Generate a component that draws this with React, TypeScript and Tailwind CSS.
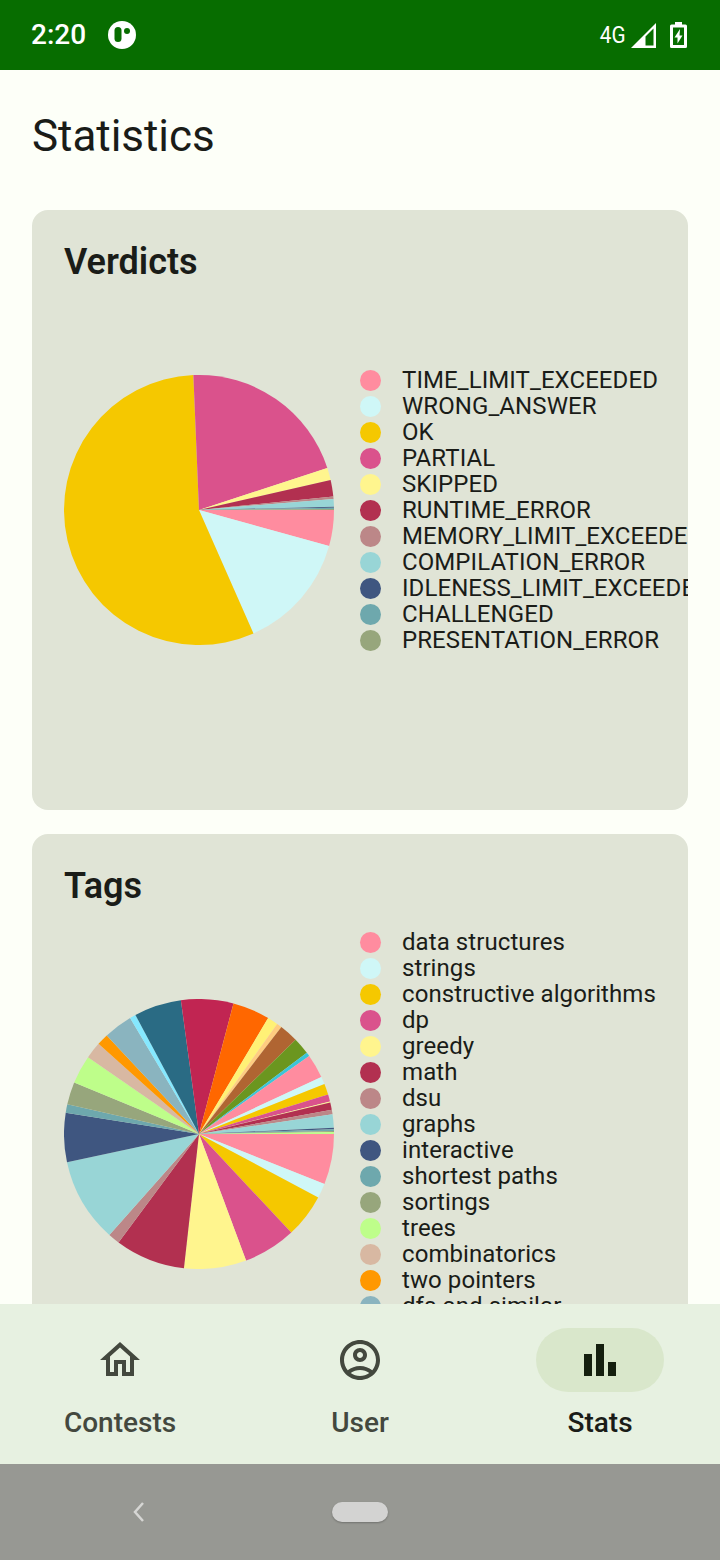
import React from "react";

type Slice = { color: string; end: number };

const verdictLabels = [
  "TIME_LIMIT_EXCEEDED",
  "WRONG_ANSWER",
  "OK",
  "PARTIAL",
  "SKIPPED",
  "RUNTIME_ERROR",
  "MEMORY_LIMIT_EXCEEDED",
  "COMPILATION_ERROR",
  "IDLENESS_LIMIT_EXCEEDED",
  "CHALLENGED",
  "PRESENTATION_ERROR",
];

const tagLabels = [
  "data structures",
  "strings",
  "constructive algorithms",
  "dp",
  "greedy",
  "math",
  "dsu",
  "graphs",
  "interactive",
  "shortest paths",
  "sortings",
  "trees",
  "combinatorics",
  "two pointers",
  "dfs and similar",
];

const palette = [
  "#FF8C9F",
  "#CFF7F7",
  "#F5C800",
  "#DA528C",
  "#FFF58E",
  "#B23050",
  "#BC8788",
  "#98D5D6",
  "#3F5680",
  "#6EA8AD",
  "#97A67C",
  "#BEFE8A",
  "#D8B8A2",
  "#FF9800",
  "#8AB4BF",
];

const verdictSlices: Slice[] = [
  { color: palette[0], end: 15.5 },
  { color: palette[1], end: 66.2 },
  { color: palette[2], end: 267.6 },
  { color: palette[3], end: 341.9 },
  { color: palette[4], end: 347.2 },
  { color: palette[5], end: 354.3 },
  { color: palette[6], end: 355.3 },
  { color: palette[7], end: 358.6 },
  { color: palette[8], end: 359 },
  { color: palette[9], end: 359.6 },
  { color: palette[10], end: 360 },
];

const tagSlices: Slice[] = [
  { color: palette[0], end: 21.7 },
  { color: palette[1], end: 28 },
  { color: palette[2], end: 46.9 },
  { color: palette[3], end: 69.6 },
  { color: palette[4], end: 96.4 },
  { color: palette[5], end: 126.6 },
  { color: palette[6], end: 131.6 },
  { color: palette[7], end: 167.9 },
  { color: palette[8], end: 189.1 },
  { color: palette[9], end: 192.7 },
  { color: palette[10], end: 202.4 },
  { color: palette[11], end: 214.7 },
  { color: palette[12], end: 221.9 },
  { color: palette[13], end: 226.9 },
  { color: palette[14], end: 239.3 },
  { color: "#85E8FF", end: 241.9 },
  { color: "#2A6B84", end: 262.3 },
  { color: "#C12552", end: 284.8 },
  { color: "#FF6700", end: 300.8 },
  { color: "#FFF176", end: 305.4 },
  { color: "#FFCC80", end: 307.6 },
  { color: "#B06532", end: 315.7 },
  { color: "#6B961F", end: 323 },
  { color: "#3BC5D8", end: 324.7 },
  { color: palette[0], end: 335 },
  { color: palette[1], end: 338.3 },
  { color: palette[2], end: 343 },
  { color: palette[3], end: 346.1 },
  { color: palette[4], end: 346.5 },
  { color: palette[5], end: 349.7 },
  { color: palette[6], end: 351.6 },
  { color: palette[7], end: 357.3 },
  { color: palette[8], end: 358 },
  { color: palette[9], end: 358.7 },
  { color: palette[10], end: 359.2 },
  { color: palette[11], end: 360 },
];

const slicePath = (start: number, end: number) => {
  const r = 135;
  const toXY = (deg: number) => {
    const rad = (deg * Math.PI) / 180;
    return `${(135 + r * Math.cos(rad)).toFixed(2)} ${(135 + r * Math.sin(rad)).toFixed(2)}`;
  };
  const large = end - start > 180 ? 1 : 0;
  return `M135 135L${toXY(start)}A${r} ${r} 0 ${large} 1 ${toXY(end)}Z`;
};

const Pie: React.FC<{ slices: Slice[] }> = ({ slices }) => (
  <svg width="270" height="270" viewBox="0 0 270 270" className="shrink-0">
    {slices.map((s, i) => (
      <path key={i} d={slicePath(i === 0 ? 0 : slices[i - 1].end, s.end)} fill={s.color} />
    ))}
  </svg>
);

const Legend: React.FC<{ labels: string[] }> = ({ labels }) => (
  <ul className="ml-[26px] flex shrink-0 flex-col">
    {labels.map((label, i) => (
      <li key={label} className="flex h-[26px] items-center whitespace-nowrap">
        <span
          className="h-[21px] w-[21px] shrink-0 rounded-full"
          style={{ backgroundColor: palette[i] }}
        />
        <span className="ml-[21px] text-[24px] leading-[26px] tracking-[0.08px] text-[#1A1C18]">{label}</span>
      </li>
    ))}
  </ul>
);

const ChartCard: React.FC<{
  title: string;
  slices: Slice[];
  labels: string[];
  alignTop?: boolean;
}> = ({ title, slices, labels, alignTop }) => (
  <section className="h-[600px] shrink-0 overflow-hidden rounded-[16px] bg-[#E0E4D6] px-8 pt-8">
    <h2 className="h-12 pt-px text-[36px] font-semibold leading-[38px] text-[#1A1C18]">{title}</h2>
    <div className={alignTop ? "flex h-[440px] items-start" : "flex h-[440px] items-center"}>
      <div className="flex h-[440px] shrink-0 items-center">
        <Pie slices={slices} />
      </div>
      <div className={alignTop ? "pt-[15px]" : ""}>
        <Legend labels={labels} />
      </div>
    </div>
  </section>
);

const StatusBar: React.FC = () => (
  <div className="flex h-[70px] shrink-0 items-center justify-between bg-[#076D00] pl-[31px] pr-[33px] text-white">
    <div className="flex items-center">
      <span className="text-[28px] font-medium leading-none">2:20</span>
      <svg width="28" height="28" viewBox="0 0 28 28" className="ml-[22px]">
        <circle cx="14" cy="14" r="14" fill="#fff" />
        <rect x="6.5" y="6" width="7" height="15" rx="3.5" fill="#076D00" />
        <circle cx="19" cy="10" r="3" fill="#076D00" />
      </svg>
    </div>
    <div className="flex items-center">
      <span className="origin-right scale-x-90 text-[23px] leading-none">4G</span>
      <svg width="25" height="25" viewBox="0 0 25 25" className="ml-[5px]">
        <path d="M25 0V25H0Z M22.5 5.5L14.5 13.5V22.5H22.5Z" fill="#fff" fillRule="evenodd" />
      </svg>
      <svg width="17" height="26" viewBox="0 0 17 26" className="ml-[14px]">
        <path
          fillRule="evenodd"
          fill="#fff"
          d="M5 0H12V2.5H15.5A1.5 1.5 0 0 1 17 4V24.5A1.5 1.5 0 0 1 15.5 26H1.5A1.5 1.5 0 0 1 0 24.5V4A1.5 1.5 0 0 1 1.5 2.5H5ZM3 5.5V23H14V5.5ZM10 7L4.5 15.5H7.5V21.5L12.5 13.5H9.5Z"
        />
      </svg>
    </div>
  </div>
);

const NavItem: React.FC<{ label: string; active?: boolean; children: React.ReactNode }> = ({
  label,
  active,
  children,
}) => (
  <div className="flex flex-1 flex-col items-center pt-6">
    <div
      className={
        active
          ? "flex h-16 w-32 items-center justify-center rounded-[32px] bg-[#D9E7CB] text-[#141F0E]"
          : "flex h-16 w-32 items-center justify-center text-[#43483E]"
      }
    >
      {children}
    </div>
    <span
      className={
        active
          ? "mt-[14px] text-[28px] font-medium leading-[34px] text-[#1A1C18]"
          : "mt-[14px] text-[28px] font-medium leading-[34px] text-[#43483E]"
      }
    >
      {label}
    </span>
  </div>
);

export default function App() {
  return (
    <div className="flex h-[1560px] w-[720px] flex-col overflow-hidden bg-[#FDFFF8] font-['Roboto',sans-serif]">
      <StatusBar />

      <main className="min-h-0 flex-1 overflow-hidden px-8">
        <h1 className="mt-[36px] h-[60px] text-[44px] font-normal leading-[60px] tracking-[-0.05px] text-[#1A1C18]">Statistics</h1>
        <div className="mt-[44px] flex flex-col gap-6">
          <ChartCard title="Verdicts" slices={verdictSlices} labels={verdictLabels} />
          <ChartCard title="Tags" slices={tagSlices} labels={tagLabels} alignTop />
        </div>
      </main>

      <nav className="flex h-40 shrink-0 bg-[#E7F1E1]">
        <NavItem label="Contests">
          <svg width="48" height="48" viewBox="0 0 24 24" fill="currentColor">
            <path d="M12 5.69l5 4.5V18h-2v-6H9v6H7v-7.81l5-4.5M12 3L2 12h3v8h6v-6h2v6h6v-8h3L12 3z" />
          </svg>
        </NavItem>
        <NavItem label="User">
          <svg width="48" height="48" viewBox="0 0 24 24" fill="currentColor">
            <path d="M12 2C6.48 2 2 6.48 2 12s4.48 10 10 10 10-4.48 10-10S17.52 2 12 2zM7.35 18.5C8.66 17.56 10.26 17 12 17s3.34.56 4.65 1.5C15.34 19.44 13.74 20 12 20s-3.34-.56-4.65-1.5zm10.79-1.38C16.45 15.8 14.32 15 12 15s-4.45.8-6.14 2.12C4.7 15.73 4 13.95 4 12c0-4.42 3.58-8 8-8s8 3.58 8 8c0 1.95-.7 3.73-1.86 5.12z" />
            <path d="M12 6c-1.93 0-3.5 1.57-3.5 3.5S10.07 13 12 13s3.5-1.57 3.5-3.5S13.93 6 12 6zm0 5c-.83 0-1.5-.67-1.5-1.5S11.17 8 12 8s1.5.67 1.5 1.5S12.83 11 12 11z" />
          </svg>
        </NavItem>
        <NavItem label="Stats" active>
          <svg width="48" height="48" viewBox="0 0 24 24" fill="currentColor">
            <path d="M4 9h4v11H4zm12 4h4v7h-4zm-6-9h4v16h-4z" />
          </svg>
        </NavItem>
      </nav>

      <div className="flex h-24 shrink-0 items-center bg-[#979893] pl-[130px]">
        <svg width="18" height="24" viewBox="0 0 18 24" fill="none">
          <path d="M13 3L5 12L13 21" stroke="#D6D6D4" strokeWidth="2.5" />
        </svg>
        <div className="ml-[184px] h-5 w-14 rounded-[10px] bg-[#D3D3D2] shadow-[0_1px_2px_rgba(0,0,0,0.25)]" />
      </div>
    </div>
  );
}
